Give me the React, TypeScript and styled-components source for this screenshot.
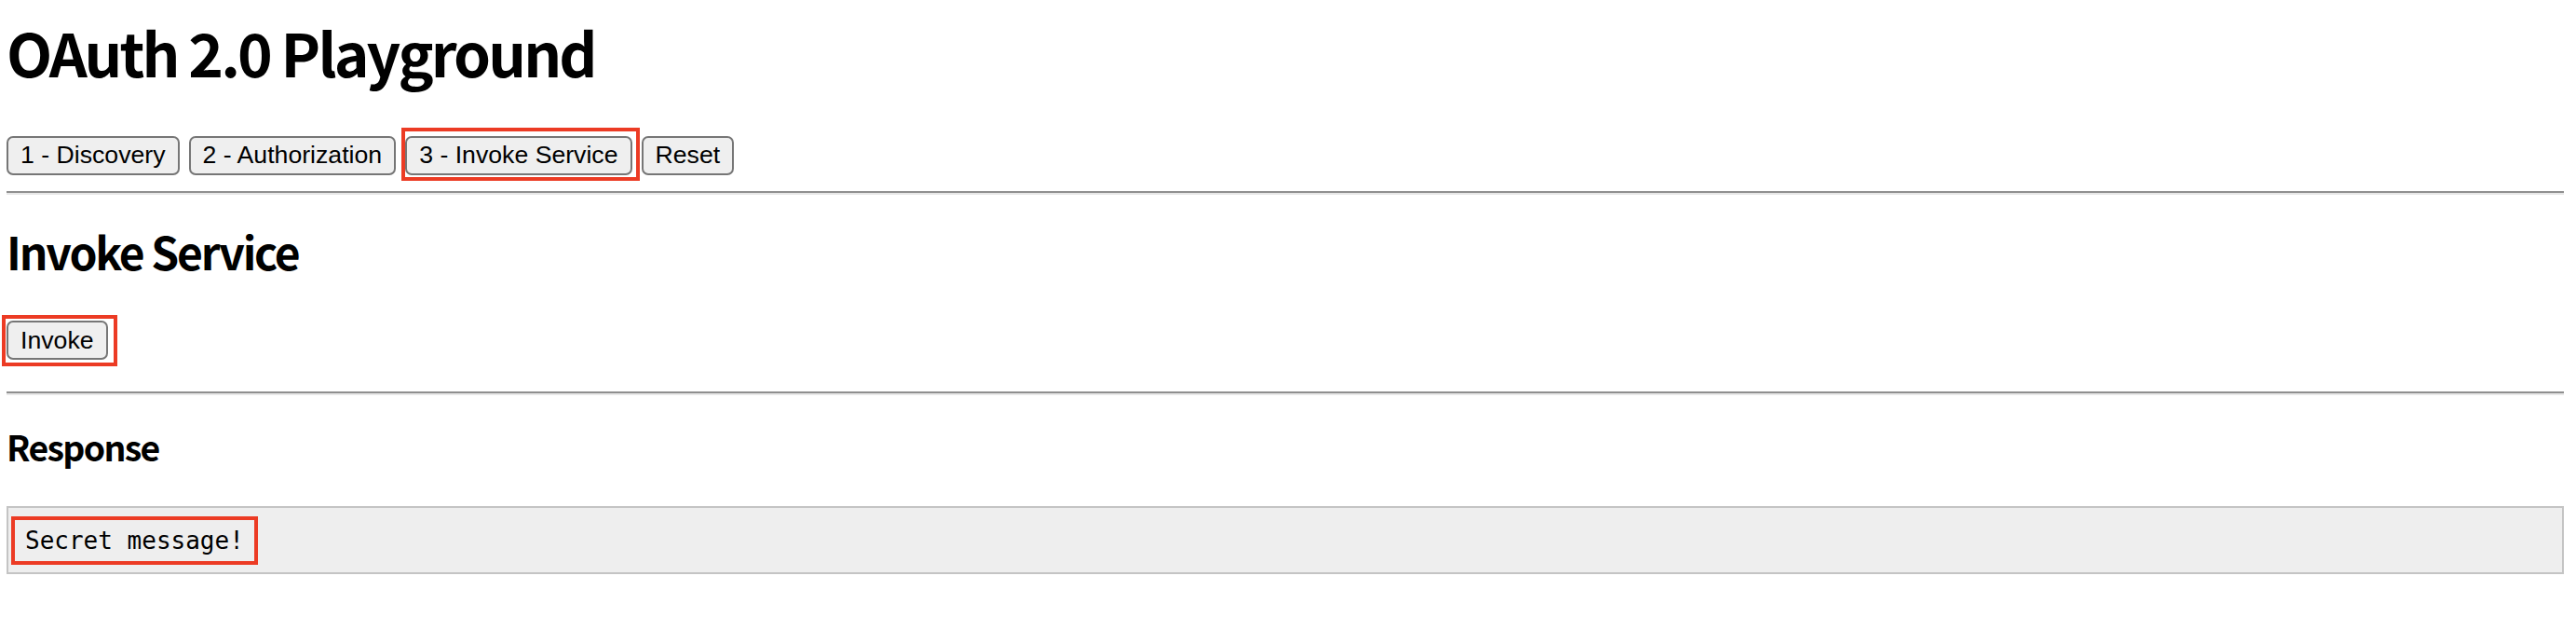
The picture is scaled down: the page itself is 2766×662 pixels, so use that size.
import styled, { createGlobalStyle } from 'styled-components';

const GlobalStyle = createGlobalStyle`
  html, body {
    margin: 0;
    padding: 0;
    background: #ffffff;
  }
`;

const Page = styled.div`
  display: flex;
  flex-direction: column;
  align-items: stretch;
  width: 2746px;
  padding: 0 0 40px 7px;
  color: #000000;
  font-family: "Noto Sans CJK KR", "Noto Sans", sans-serif;
`;

const Title = styled.h1`
  margin: 17px 0 0;
  font-size: 64px;
  font-weight: 700;
  line-height: 1.2;
  letter-spacing: -0.045em;
`;

const SectionTitle = styled.h2<{ $size: number; $top: number }>`
  margin: ${(p) => p.$top}px 0 0;
  font-size: ${(p) => p.$size}px;
  font-weight: 700;
  line-height: 1.2;
  letter-spacing: -0.045em;
`;

const Toolbar = styled.div<{ $top: number }>`
  display: flex;
  align-items: center;
  gap: 10px;
  margin-top: ${(p) => p.$top}px;
`;

const Button = styled.button`
  box-sizing: border-box;
  display: inline-flex;
  align-items: center;
  height: 42px;
  padding: 0 13px;
  border: 2px solid #767676;
  border-radius: 7px;
  background: #efefef;
  color: #000000;
  font-family: "Liberation Sans", Arial, sans-serif;
  font-size: 26.67px;
  line-height: normal;
  cursor: pointer;
`;

const Rule = styled.hr<{ $top: number }>`
  box-sizing: border-box;
  width: 100%;
  height: 4px;
  margin: ${(p) => p.$top}px 0 0;
  border: none;
  border-top: 2px solid #8f8f8f;
  border-bottom: 2px solid #e8e8e8;
`;

const ResponseBox = styled.pre`
  margin: 41px 0 0;
  padding: 20px 18px 19px;
  border: 2px solid #c4c4c4;
  background: #eeeeee;
  font-family: "DejaVu Sans Mono", "Liberation Mono", monospace;
  font-size: 26px;
  line-height: normal;
  display: flex;
`;

const Marked = styled.span`
  position: relative;
  display: inline-flex;
`;

const Frame = styled.span<{ $t: number; $r: number; $b: number; $l: number }>`
  position: absolute;
  top: ${(p) => -p.$t}px;
  right: ${(p) => -p.$r}px;
  bottom: ${(p) => -p.$b}px;
  left: ${(p) => -p.$l}px;
  border: 4px solid #ec3b24;
  pointer-events: none;
`;

const steps = ['1 - Discovery', '2 - Authorization', '3 - Invoke Service', 'Reset'];

const App = () => (
  <>
    <GlobalStyle />
    <Page>
      <Title>OAuth 2.0 Playground</Title>
      <Toolbar $top={52}>
        {steps.map((step) => (step.startsWith('3') ? (
          <Marked key={step}>
            <Button type="button">{step}</Button>
            <Frame $t={9} $r={8} $b={6} $l={4} />
          </Marked>
        ) : (
          <Button key={step} type="button">{step}</Button>
        )))}
      </Toolbar>
      <Rule $top={17} />
      <SectionTitle $size={48} $top={32}>Invoke Service</SectionTitle>
      <Toolbar $top={46}>
        <Marked>
          <Button type="button">Invoke</Button>
          <Frame $t={6} $r={10} $b={7} $l={5} />
        </Marked>
      </Toolbar>
      <Rule $top={34} />
      <SectionTitle $size={37.44} $top={33}>Response</SectionTitle>
      <ResponseBox>
        <Marked>
          Secret message!
          <Frame $t={11} $r={15} $b={11} $l={15} />
        </Marked>
      </ResponseBox>
    </Page>
  </>
);

export default App;
